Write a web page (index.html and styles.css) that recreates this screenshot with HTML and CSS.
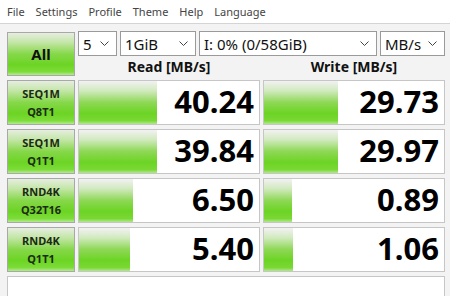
FILE: index.html
```html
<!DOCTYPE html>
<html lang="en">
<head>
    <meta charset="UTF-8">
    <title>CrystalDiskMark</title>
    <link rel="stylesheet" href="styles.css">
</head>
<body>
    <div class="menubar">
        <span>File</span>
        <span>Settings</span>
        <span>Profile</span>
        <span>Theme</span>
        <span>Help</span>
        <span>Language</span>
    </div>
    <div class="main">
        <div class="top">
            <button class="btn-all">All</button>
            <div class="controls">
                <div class="selects">
                    <div class="combo combo-count">5<svg class="chev" width="9" height="5" viewBox="0 0 9 5"><polyline points="0.5,0.5 4.5,4.5 8.5,0.5" fill="none" stroke="#444" stroke-width="1"/></svg></div>
                    <div class="combo combo-size">1GiB<svg class="chev" width="9" height="5" viewBox="0 0 9 5"><polyline points="0.5,0.5 4.5,4.5 8.5,0.5" fill="none" stroke="#444" stroke-width="1"/></svg></div>
                    <div class="combo combo-drive">I: 0% (0/58GiB)<svg class="chev" width="9" height="5" viewBox="0 0 9 5"><polyline points="0.5,0.5 4.5,4.5 8.5,0.5" fill="none" stroke="#444" stroke-width="1"/></svg></div>
                    <div class="combo combo-unit">MB/s<svg class="chev" width="9" height="5" viewBox="0 0 9 5"><polyline points="0.5,0.5 4.5,4.5 8.5,0.5" fill="none" stroke="#444" stroke-width="1"/></svg></div>
                </div>
                <div class="headers">
                    <div>Read [MB/s]</div>
                    <div>Write [MB/s]</div>
                </div>
            </div>
        </div>

        <div class="results">
            <div class="label">SEQ1M<br>Q8T1</div>
            <div class="cell" style="--bar: 78px">40.24</div>
            <div class="cell" style="--bar: 74px">29.73</div>

            <div class="label">SEQ1M<br>Q1T1</div>
            <div class="cell" style="--bar: 78px">39.84</div>
            <div class="cell" style="--bar: 74px">29.97</div>

            <div class="label">RND4K<br>Q32T16</div>
            <div class="cell" style="--bar: 54px">6.50</div>
            <div class="cell" style="--bar: 28px">0.89</div>

            <div class="label">RND4K<br>Q1T1</div>
            <div class="cell" style="--bar: 51px">5.40</div>
            <div class="cell" style="--bar: 29px">1.06</div>
        </div>

        <div class="comment"></div>
    </div>
</body>
</html>
```

FILE: styles.css
```css
body {
    margin: 0;
    font-family: 'Noto Sans', 'Open Sans', sans-serif;
    background-color: #f3f3f3;
    height: 296px;
    overflow: hidden;
}
.menubar {
    height: 23px;
    background-color: white;
    border-bottom: 1px solid #d4d4d4;
    display: flex;
    align-items: center;
    padding-left: 7px;
    gap: 11px;
    font-size: 11px;
    color: #444;
}
.main {
    padding: 7px 5px 0 7px;
}
.top {
    display: flex;
    gap: 3px;
    height: 45px;
}
.btn-all {
    width: 68px;
    height: 44px;
    margin-top: 1px;
    padding: 0;
    border: 1px solid #a8a8a8;
    font-family: inherit;
    font-size: 15px;
    font-weight: bold;
    color: #111;
}
.btn-all, .label {
    background: linear-gradient(to bottom, #e6eee0 0%, #c4e6a8 22%, #86d84a 50%, #6cd424 75%, #7cdc38 92%, #b4ea90 100%);
}
.controls {
    flex: 1;
    display: flex;
    flex-direction: column;
}
.selects {
    display: flex;
    gap: 3px;
    height: 25px;
}
.combo {
    box-sizing: border-box;
    height: 25px;
    background-color: white;
    border: 1px solid #9a9a9a;
    display: flex;
    align-items: center;
    justify-content: space-between;
    padding: 0 7px 0 4px;
    font-size: 15px;
    color: #111;
}
.combo-count { width: 39px; }
.combo-size { width: 76px; }
.combo-drive { width: 178px; }
.combo-unit { width: 65px; }
.chev {
    flex-shrink: 0;
}
.headers {
    display: grid;
    grid-template-columns: 182px 182px;
    column-gap: 3px;
    flex: 1;
    align-items: center;
    font-size: 14px;
    font-weight: bold;
    color: #111;
    text-align: center;
}
.results {
    margin-top: 4px;
    display: grid;
    grid-template-columns: 68px 182px 182px;
    grid-auto-rows: 45px;
    column-gap: 3px;
    row-gap: 4px;
}
.label {
    box-sizing: border-box;
    border: 1px solid #a8a8a8;
    display: flex;
    align-items: center;
    justify-content: center;
    text-align: center;
    font-size: 11px;
    font-weight: bold;
    line-height: 18px;
    color: #1c2a14;
}
.cell {
    box-sizing: border-box;
    border: 1px solid #c6c6c6;
    background-color: white;
    background-image: linear-gradient(to bottom, #f2f2f2 0%, #d2eac0 22%, #8ed856 50%, #6cd424 75%, #7ad834 92%, #b0e88c 100%);
    background-repeat: no-repeat;
    background-size: var(--bar) 100%;
    display: flex;
    align-items: center;
    justify-content: flex-end;
    padding: 0 5px 3px 0;
    font-size: 31px;
    font-weight: bold;
    color: #000;
    line-height: 1;
}
.comment {
    margin-top: 4px;
    box-sizing: border-box;
    height: 30px;
    background-color: white;
    border: 1px solid #c6c6c6;
}
```
